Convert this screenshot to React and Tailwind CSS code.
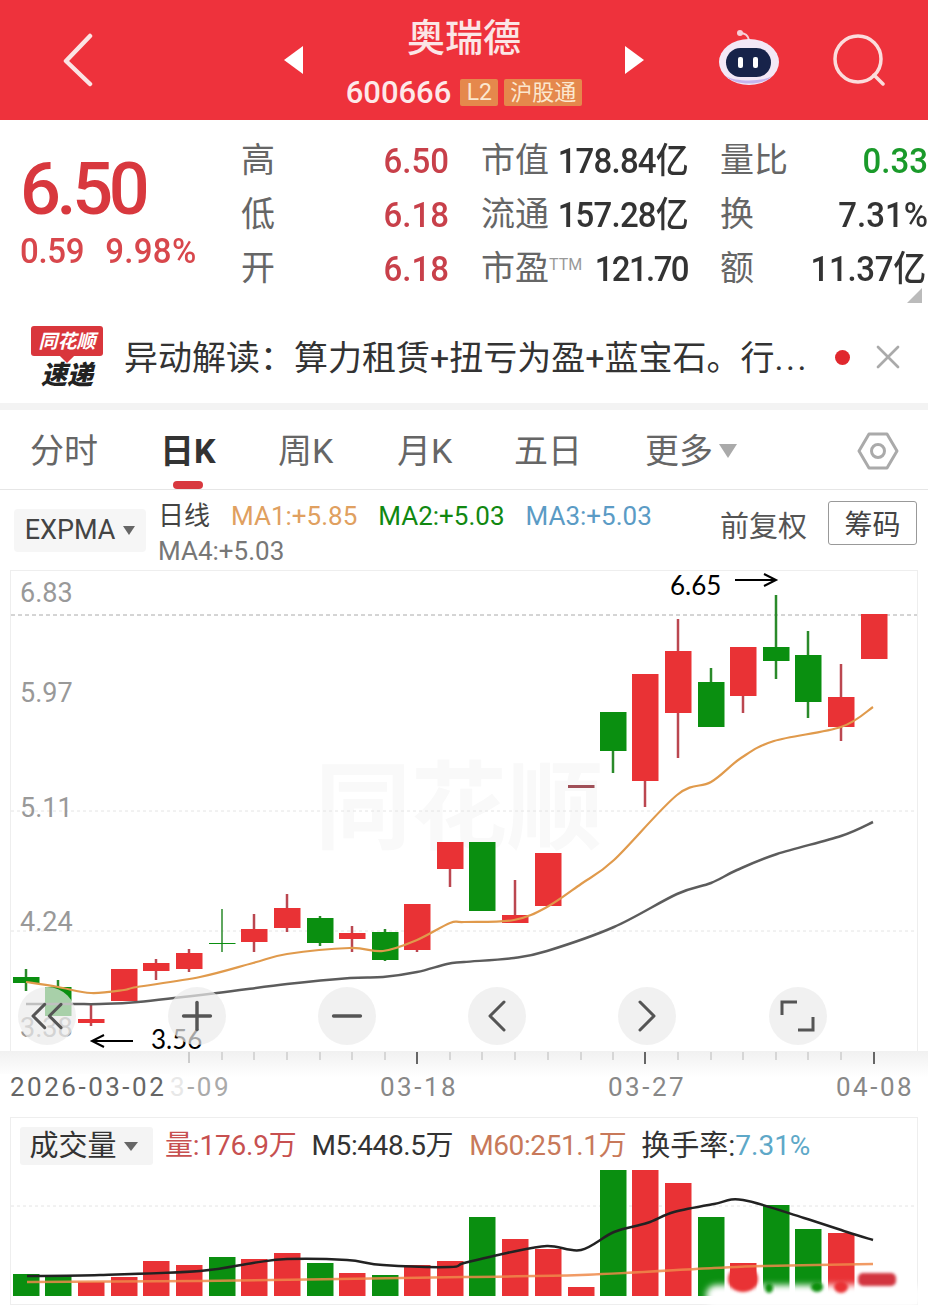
import { ChevronLeft, ChevronRight, ChevronsLeft, Minus, Plus, X } from 'lucide-react';

const RED = '#e93235';
const GREEN = '#0a8f10';
const WICK_RED = '#bb4750';
const WICK_GREEN = '#2a8a2a';

// x, color, bodyTop, bodyBottom, wickTop, wickBottom
const candles = [
  [26, 'g', 977, 983, 969, 991],
  [58, 'g', 987, 1016, 980, 1016],
  [91, 'r', 1019, 1023, 1003, 1026],
  [124, 'r', 969, 1001, 969, 1001],
  [156, 'r', 963, 971, 959, 980],
  [189, 'r', 953, 969, 949, 972],
  [222, 'g', 943, 944, 909, 952],
  [254, 'r', 929, 942, 914, 952],
  [287, 'r', 908, 928, 894, 932],
  [320, 'g', 918, 943, 916, 946],
  [352, 'r', 933, 939, 926, 952],
  [385, 'g', 932, 960, 929, 961],
  [417, 'r', 904, 950, 904, 952],
  [450, 'r', 842, 869, 842, 887],
  [482, 'g', 842, 911, 842, 911],
  [515, 'r', 915, 923, 880, 923],
  [548, 'r', 853, 906, 853, 906],
  [581, 'd', 785, 788, 785, 788],
  [613, 'g', 712, 751, 712, 773],
  [645, 'r', 674, 781, 674, 807],
  [678, 'r', 651, 713, 619, 758],
  [711, 'g', 682, 727, 668, 727],
  [743, 'r', 647, 696, 647, 713],
  [776, 'g', 647, 661, 595, 679],
  [808, 'g', 655, 702, 631, 718],
  [841, 'r', 697, 727, 664, 741],
  [874, 'r', 614, 659, 614, 659],
];

// the last bar sits in the blurred watermark, it is drawn separately
const volumes = [
  [26, 'g', 1274], [58, 'g', 1276], [91, 'r', 1282], [124, 'r', 1277], [156, 'r', 1261],
  [189, 'r', 1265], [222, 'g', 1257], [254, 'r', 1259], [287, 'r', 1253], [320, 'g', 1263],
  [352, 'r', 1273], [385, 'g', 1275], [417, 'r', 1265], [450, 'r', 1261], [482, 'g', 1217],
  [515, 'r', 1239], [548, 'r', 1249], [581, 'r', 1287], [613, 'g', 1170], [645, 'r', 1170],
  [678, 'r', 1183], [711, 'g', 1217], [743, 'r', 1263], [776, 'g', 1205], [808, 'g', 1229],
  [841, 'r', 1233],
];

const ma1 = [[26, 982], [58, 987], [91, 993], [124, 990], [137, 987], [200, 977], [253, 963], [287, 954], [350, 948], [383, 951], [417, 940], [450, 923], [464, 922], [514, 920], [547, 907], [581, 884], [614, 860], [677, 795], [711, 782], [741, 758], [774, 741], [841, 727], [873, 707]];
const ma2 = [[26, 1004], [73, 1004], [100, 1004], [138, 1002], [217, 993], [287, 984], [350, 978], [383, 977], [417, 972], [447, 964], [464, 962], [514, 958], [547, 951], [614, 927], [677, 894], [711, 883], [737, 870], [777, 854], [841, 836], [873, 822]];
const volBlack = [[27, 1276], [100, 1275], [200, 1271], [253, 1263], [287, 1259], [347, 1260], [383, 1265], [450, 1267], [464, 1263], [507, 1253], [547, 1246], [581, 1250], [614, 1232], [647, 1223], [674, 1212], [714, 1204], [743, 1200], [804, 1218], [847, 1232], [873, 1240]];
const volOrange = [[27, 1282], [200, 1281], [464, 1277], [581, 1275], [714, 1268], [764, 1266], [873, 1264]];

// catmull-rom through the points so the averages don't look like polylines
function smoothPath(pts) {
  let d = `M${pts[0][0]} ${pts[0][1]}`;
  for (let i = 0; i < pts.length - 1; i++) {
    const p0 = pts[i - 1] || pts[i];
    const p1 = pts[i];
    const p2 = pts[i + 1];
    const p3 = pts[i + 2] || p2;
    const c1x = p1[0] + (p2[0] - p0[0]) / 6;
    const c1y = p1[1] + (p2[1] - p0[1]) / 6;
    const c2x = p2[0] - (p3[0] - p1[0]) / 6;
    const c2y = p2[1] - (p3[1] - p1[1]) / 6;
    d += ` C${c1x} ${c1y} ${c2x} ${c2y} ${p2[0]} ${p2[1]}`;
  }
  return d;
}

const priceLabels = [
  ['6.83', 'top-[7px]'],
  ['5.97', 'top-[107px]'],
  ['5.11', 'top-[222px]'],
  ['4.24', 'top-[336px]'],
];

function CandleChart() {
  return (
    <svg className="absolute inset-0" width="928" height="481" viewBox="0 570 928 481">
      <line x1="11" y1="615" x2="917" y2="615" stroke="#aaa" strokeWidth="1" strokeDasharray="4 3" />
      <line x1="11" y1="811" x2="917" y2="811" stroke="#e4e4e4" strokeWidth="1" strokeDasharray="3 3" />
      <line x1="11" y1="931" x2="917" y2="931" stroke="#e4e4e4" strokeWidth="1" strokeDasharray="3 3" />
      {candles.map(([x, c, top, bottom, wickTop, wickBottom]) => (
        <g key={x}>
          <line x1={x} y1={wickTop} x2={x} y2={wickBottom} stroke={c === 'g' ? WICK_GREEN : WICK_RED} strokeWidth={x === 222 ? 1.5 : 2.5} />
          <rect x={x - 13} y={top} width="26.5" height={bottom - top} fill={c === 'g' ? GREEN : c === 'r' ? RED : '#a05058'} />
        </g>
      ))}
      <path d={smoothPath(ma2)} fill="none" stroke="#5c5c5c" strokeWidth="2.5" />
      <path d={smoothPath(ma1)} fill="none" stroke="#e09a4c" strokeWidth="2.2" />
    </svg>
  );
}

function VolumeChart() {
  return (
    <svg className="absolute inset-0" width="928" height="188" viewBox="0 1117 928 188">
      <defs>
        <filter id="soft" x="-20%" y="-80%" width="140%" height="260%">
          <feGaussianBlur stdDeviation="3" />
        </filter>
        <filter id="softer" x="-20%" y="-100%" width="140%" height="300%">
          <feGaussianBlur stdDeviation="1.5" />
        </filter>
      </defs>
      <line x1="11" y1="1206" x2="917" y2="1206" stroke="#e4e4e4" strokeWidth="1" strokeDasharray="3 3" />
      {volumes.map(([x, c, top]) => (
        <rect key={x} x={x - 13} y={top} width="26.5" height={1296 - top} fill={c === 'g' ? GREEN : RED} />
      ))}
      {/* blurred watermark over the last bars */}
      <rect x="706" y="1285" width="216" height="22" rx="10" fill="#fff" filter="url(#soft)" />
      <ellipse cx="743" cy="1279" rx="15" ry="13" fill={RED} filter="url(#softer)" />
      <ellipse cx="769" cy="1288" rx="4" ry="5" fill={GREEN} filter="url(#softer)" />
      <ellipse cx="817" cy="1287" rx="6" ry="5" fill={GREEN} filter="url(#softer)" />
      <ellipse cx="841" cy="1287" rx="7" ry="6" fill={RED} filter="url(#softer)" />
      <rect x="858" y="1273" width="38" height="13" rx="5" fill="#d23540" filter="url(#softer)" />
      <line x1="725" y1="1297" x2="917" y2="1297" stroke="#dcdcdc" strokeWidth="3" strokeDasharray="9 5" filter="url(#softer)" />
      <path d={smoothPath(volOrange)} fill="none" stroke="#ee8a4a" strokeWidth="2.5" opacity="0.85" />
      <path d={smoothPath(volBlack)} fill="none" stroke="#222" strokeWidth="2.5" />
    </svg>
  );
}

function RobotIcon() {
  return (
    <svg width="62" height="60" viewBox="0 0 62 60">
      <circle cx="22" cy="3" r="3" fill="#f6cfd8" />
      <path d="M22 3 C26 3 30 5 31 10" stroke="#f6cfd8" strokeWidth="2" fill="none" />
      <ellipse cx="31" cy="32" rx="30" ry="23" fill="#f3e8f6" />
      <path d="M8 46 C16 56 46 56 54 46 C46 52 16 52 8 46 Z" fill="#c6b4ee" />
      <rect x="8" y="18" width="45" height="29" rx="14.5" fill="#17234a" />
      <rect x="20" y="27" width="5" height="11" rx="2" fill="#fff" />
      <rect x="35" y="27" width="5" height="11" rx="2" fill="#fff" />
    </svg>
  );
}

function SearchIcon() {
  return (
    <svg width="52" height="52" viewBox="0 0 52 52" fill="none" stroke="#fbdcdc" strokeWidth="3.5" strokeLinecap="round">
      <circle cx="25" cy="25" r="23" />
      <path d="M41 41 L50 50" />
    </svg>
  );
}

function HexIcon() {
  return (
    <svg width="42" height="38" viewBox="0 0 42 38" fill="none" stroke="#aaa" strokeWidth="3" strokeLinejoin="round">
      <path d="M12 2 H30 L40 19 L30 36 H12 L2 19 Z" />
      <circle cx="21" cy="19" r="6.5" />
    </svg>
  );
}

function NewsLogo() {
  return (
    <div className="flex w-[74px] flex-col items-center">
      <div className="relative flex h-[30px] w-[72px] items-center justify-center rounded-[3px] bg-[#d9363c] text-[19px] leading-none font-bold text-white italic">
        同花顺
        <span className="absolute -bottom-[5px] left-[31px] h-[10px] w-[10px] rotate-45 bg-[#d9363c]" />
      </div>
      <div className="mt-[6px] text-[26px] leading-none font-black text-[#222] italic">速递</div>
    </div>
  );
}

function StatCell({ label, value, valueClass }) {
  return (
    <div className="flex h-[33px] items-center justify-between whitespace-nowrap">
      <span className="text-[34px] leading-[33px] text-[#666]">{label}</span>
      <span className={`inline-block scale-y-[1.08] text-[33px] leading-[33px] font-medium ${valueClass}`}>{value}</span>
    </div>
  );
}

export default function App() {
  return (
    <div className="w-[928px] h-[1309px] overflow-hidden bg-white font-['Roboto','Noto_Sans_CJK_SC',sans-serif]">
      {/* Top bar */}
      <div className="grid h-[120px] grid-cols-[284px_360px_284px] bg-[#ee323c] text-white">
        <div className="flex items-center pl-[62px]">
          <svg width="32" height="54" viewBox="0 0 32 54" fill="none" stroke="#fbe4e4" strokeWidth="4.5" strokeLinecap="round" strokeLinejoin="round">
            <path d="M28 3 L4 28 L28 51" />
          </svg>
        </div>
        <div className="flex items-center justify-between">
          <span className="h-0 w-0 border-y-[14px] border-r-[19px] border-y-transparent border-r-white" />
          <div className="flex h-full flex-col items-center pt-[15px]">
            <div className="text-[38px] leading-[46px] font-medium text-[#fbe6e6]">奥瑞德</div>
            <div className="mt-[16px] flex items-center">
              <span className="mr-[9px] text-[31px] leading-none font-medium text-[#fde9e9]">600666</span>
              <span className="mr-[6px] flex h-[27px] w-[38px] items-center justify-center rounded-[2px] bg-[#e5884c] text-[23px] leading-none text-[#fbe7cf]">L2</span>
              <span className="flex h-[27px] w-[78px] items-center justify-center rounded-[2px] bg-[#e5884c] text-[22px] leading-none text-[#fbe7cf]">沪股通</span>
            </div>
          </div>
          <span className="h-0 w-0 border-y-[14px] border-l-[19px] border-y-transparent border-l-white" />
        </div>
        <div className="flex items-center pl-[74px]">
          <RobotIcon />
          <div className="ml-[53px]">
            <SearchIcon />
          </div>
        </div>
      </div>

      {/* Quote */}
      <div className="relative flex h-[200px]">
        <div className="w-[241px] pl-[20px]">
          <div className="mt-[32px] text-[72px] leading-[76px] font-medium tracking-[-4.4px] text-[#d8383e]">6.50</div>
          <div className="mt-[3px] flex gap-[21px] text-[33px] leading-[40px] font-medium tracking-[-0.3px] text-[#d8474c]">
            <span className="inline-block scale-y-[1.08]">0.59</span>
            <span className="inline-block scale-y-[1.08] tracking-[0.3px]">9.98%</span>
          </div>
        </div>
        <div className="grid h-fit w-[687px] grid-cols-[208px_207px_208px] gap-x-[32px] gap-y-[21px] pt-[24px]">
          <StatCell label="高" value="6.50" valueClass="text-[#c8404a]" />
          <StatCell label="市值" value="178.84亿" valueClass="tracking-[-0.8px] text-[#333]" />
          <StatCell label="量比" value="0.33" valueClass="text-[#1a9a2a]" />
          <StatCell label="低" value="6.18" valueClass="text-[#c8404a]" />
          <StatCell label="流通" value="157.28亿" valueClass="tracking-[-0.8px] text-[#333]" />
          <StatCell label="换" value="7.31%" valueClass="text-[#333]" />
          <StatCell label="开" value="6.18" valueClass="text-[#c8404a]" />
          <StatCell
            label={
              <>
                市盈<span className="relative -top-[10px] text-[16px] leading-none text-[#999]">TTM</span>
              </>
            }
            value="121.70"
            valueClass="tracking-[-1.6px] text-[#333]"
          />
          <StatCell label="额" value="11.37亿" valueClass="mr-[2px] tracking-[-0.3px] text-[#333]" />
        </div>
        <span className="absolute right-[6px] top-[168px] h-0 w-0 border-b-[15px] border-l-[15px] border-b-[#bbb] border-l-transparent" />
      </div>

      {/* Alert */}
      <div className="flex h-[83px] items-center pb-[9px] pl-[30px]">
        <NewsLogo />
        <span className="ml-[20px] mt-[2px] w-[690px] text-[34px] leading-none whitespace-nowrap text-[#333]">
          异动解读：算力租赁+扭亏为盈+蓝宝石。行<span className="tracking-[2.5px]">...</span>
        </span>
        <span className="ml-[21px] h-[15px] w-[15px] rounded-full bg-[#e0282e]" />
        <X className="ml-[18px] h-[40px] w-[40px] text-[#aaa]" strokeWidth={1.6} />
      </div>
      <div className="h-[7px] bg-[#f3f3f3]" />

      {/* Period tabs */}
      <div className="relative flex h-[80px] items-center border-b border-[#e6e6e6] pt-[2px] text-[34px] leading-none text-[#666]">
        <span className="ml-[30px] w-[130px]">分时</span>
        <span className="w-[118px] font-bold text-[#333]">日K</span>
        <span className="w-[119px]">周K</span>
        <span className="w-[117px]">月K</span>
        <span className="w-[131px]">五日</span>
        <span>更多</span>
        <span className="ml-[6px] h-0 w-0 border-x-[9px] border-t-[14px] border-x-transparent border-t-[#aaa]" />
        <div className="ml-auto mr-[29px]">
          <HexIcon />
        </div>
        <span className="absolute bottom-[0px] left-[173px] h-[8px] w-[30px] rounded-full bg-[#d8383e]" />
      </div>

      {/* Indicator legend */}
      <div className="flex h-[80px] items-start pl-[14px]">
        <div className="mt-[19px] flex h-[43px] w-[132px] items-center justify-center gap-[8px] rounded bg-[#f6f6f6] text-[27px] leading-none text-[#444]">
          EXPMA
          <span className="h-0 w-0 border-x-[6px] border-t-[9px] border-x-transparent border-t-[#666]" />
        </div>
        <div className="ml-[12px] mt-[9px] w-[556px] text-[26px] leading-[35px] whitespace-nowrap">
          <div className="flex gap-[21px]">
            <span className="text-[#444]">日线</span>
            <span className="text-[#e0a060]">MA1:+5.85</span>
            <span className="text-[#118811]">MA2:+5.03</span>
            <span className="text-[#5b9bc5]">MA3:+5.03</span>
          </div>
          <div className="text-[#777]">MA4:+5.03</div>
        </div>
        <span className="ml-[6px] mt-[19px] text-[29px] leading-[36px] text-[#555]">前复权</span>
        <span className="ml-[21px] mt-[11px] flex h-[44px] w-[89px] items-center justify-center rounded-[3px] border border-[#999] pt-[6px] text-[28px] leading-none text-[#444]">筹码</span>
      </div>

      {/* Candle chart */}
      <div className="relative h-[481px]">
        <div className="absolute left-[10px] right-[10px] inset-y-0 border border-b-0 border-[#eee]" />
        <div className="absolute left-[315px] top-[190px] text-[96px] leading-none font-bold text-[#f9f9f9]">同花顺</div>
        <CandleChart />
        {priceLabels.map(([text, top]) => (
          <span key={text} className={`absolute left-[20px] text-[27px] leading-[32px] text-[#999] ${top}`}>{text}</span>
        ))}
        <span className="absolute left-[20px] top-[442px] text-[27px] leading-[32px] text-[#999]">3.38</span>

        {/* Hand-drawn annotations */}
        <span className="absolute left-[670px] top-[0px] font-['Lato',sans-serif] text-[26px] leading-[30px] text-black">6.65</span>
        <svg className="absolute left-[733px] top-[2px]" width="46" height="16" viewBox="0 0 46 16" fill="none" stroke="#000" strokeWidth="2">
          <path d="M2 8 H43 M31 2 L43 8 L31 14" />
        </svg>
        <span className="absolute left-[151px] top-[457px] font-['Lato',sans-serif] text-[26px] leading-[24px] text-black">3.56</span>
        <svg className="absolute left-[89px] top-[463px]" width="46" height="16" viewBox="0 0 46 16" fill="none" stroke="#000" strokeWidth="2">
          <path d="M44 8 H3 M15 2 L3 8 L15 14" />
        </svg>

        {/* Floating zoom controls */}
        <button className="absolute left-[18px] top-[417px] flex h-[58px] w-[58px] items-center justify-center rounded-full bg-[#ebebeb]/70 text-[#555]"><ChevronsLeft className="h-[56px] w-[56px]" strokeWidth={1.3} /></button>
        <button className="absolute left-[168px] top-[417px] flex h-[58px] w-[58px] items-center justify-center rounded-full bg-[#ebebeb]/70 text-[#555]"><Plus className="h-[46px] w-[46px]" strokeWidth={1.8} /></button>
        <button className="absolute left-[318px] top-[417px] flex h-[58px] w-[58px] items-center justify-center rounded-full bg-[#ebebeb]/70 text-[#555]"><Minus className="h-[46px] w-[46px]" strokeWidth={1.8} /></button>
        <button className="absolute left-[468px] top-[417px] flex h-[58px] w-[58px] items-center justify-center rounded-full bg-[#ebebeb]/70 text-[#555]"><ChevronLeft className="h-[56px] w-[56px]" strokeWidth={1.3} /></button>
        <button className="absolute left-[618px] top-[417px] flex h-[58px] w-[58px] items-center justify-center rounded-full bg-[#ebebeb]/70 text-[#555]"><ChevronRight className="h-[56px] w-[56px]" strokeWidth={1.3} /></button>
        <button className="absolute left-[769px] top-[417px] flex h-[58px] w-[58px] items-center justify-center rounded-full bg-[#ebebeb]/70">
          <svg width="58" height="58" viewBox="0 0 58 58" fill="none" stroke="#555" strokeWidth="3">
            <path d="M13 28 V15 H28 M44 30 V43 H29" />
          </svg>
        </button>
      </div>

      {/* Date axis */}
      <div className="relative h-[66px] bg-gradient-to-b from-[#f1f1f1] to-white to-40% text-[26px] leading-none tracking-[2.5px] text-[#888]">
        <svg className="absolute inset-0" width="928" height="20" viewBox="0 0 928 20">
          {candles.slice(6).map(([x]) => (
            <line key={x} x1={x} y1="1" x2={x} y2="9" stroke="#ccc" strokeWidth="1.5" />
          ))}
          <line x1="189" y1="1" x2="189" y2="12" stroke="#ccc" strokeWidth="2" />
          <line x1="417" y1="1" x2="417" y2="13" stroke="#666" strokeWidth="2" />
          <line x1="645" y1="1" x2="645" y2="13" stroke="#666" strokeWidth="2" />
          <line x1="874" y1="1" x2="874" y2="13" stroke="#666" strokeWidth="2" />
        </svg>
        <span className="absolute left-[170px] top-[23px] text-[#aaa]"><span className="text-[#e8e8e8]">3</span>-09</span>
        <span className="absolute left-[0px] top-[23px] bg-white pl-[10px] pr-[4px] text-[#666]">2026-03-02</span>
        <span className="absolute left-[380px] top-[23px]">03-18</span>
        <span className="absolute left-[608px] top-[23px]">03-27</span>
        <span className="absolute left-[836px] top-[23px]">04-08</span>
      </div>

      {/* Volume chart */}
      <div className="relative mx-[10px] h-[188px] border border-[#eee]">
        <div className="absolute -left-[11px] -top-[1px] h-[188px] w-[928px]">
          <VolumeChart />
        </div>
        <div className="relative flex items-center whitespace-nowrap pl-[9px] pt-[9px] text-[28px] leading-none">
          <div className="flex h-[38px] w-[133px] items-center justify-center gap-[7px] rounded-[3px] bg-[#f4f4f4] pr-[6px] text-[29px] text-[#333]">
            成交量
            <span className="h-0 w-0 border-x-[7px] border-t-[9px] border-x-transparent border-t-[#666]" />
          </div>
          <span className="ml-[12px] tracking-[-0.2px] text-[#c75050]">量:176.9万</span>
          <span className="ml-[15px] tracking-[-0.4px] text-[#333]">M5:448.5万</span>
          <span className="ml-[16px] tracking-[-0.4px] text-[#c8795a]">M60:251.1万</span>
          <span className="ml-[15px] text-[29px] text-[#333]">换手率:</span>
          <span className="text-[#5ea8c8]">7.31%</span>
        </div>
      </div>
    </div>
  );
}
